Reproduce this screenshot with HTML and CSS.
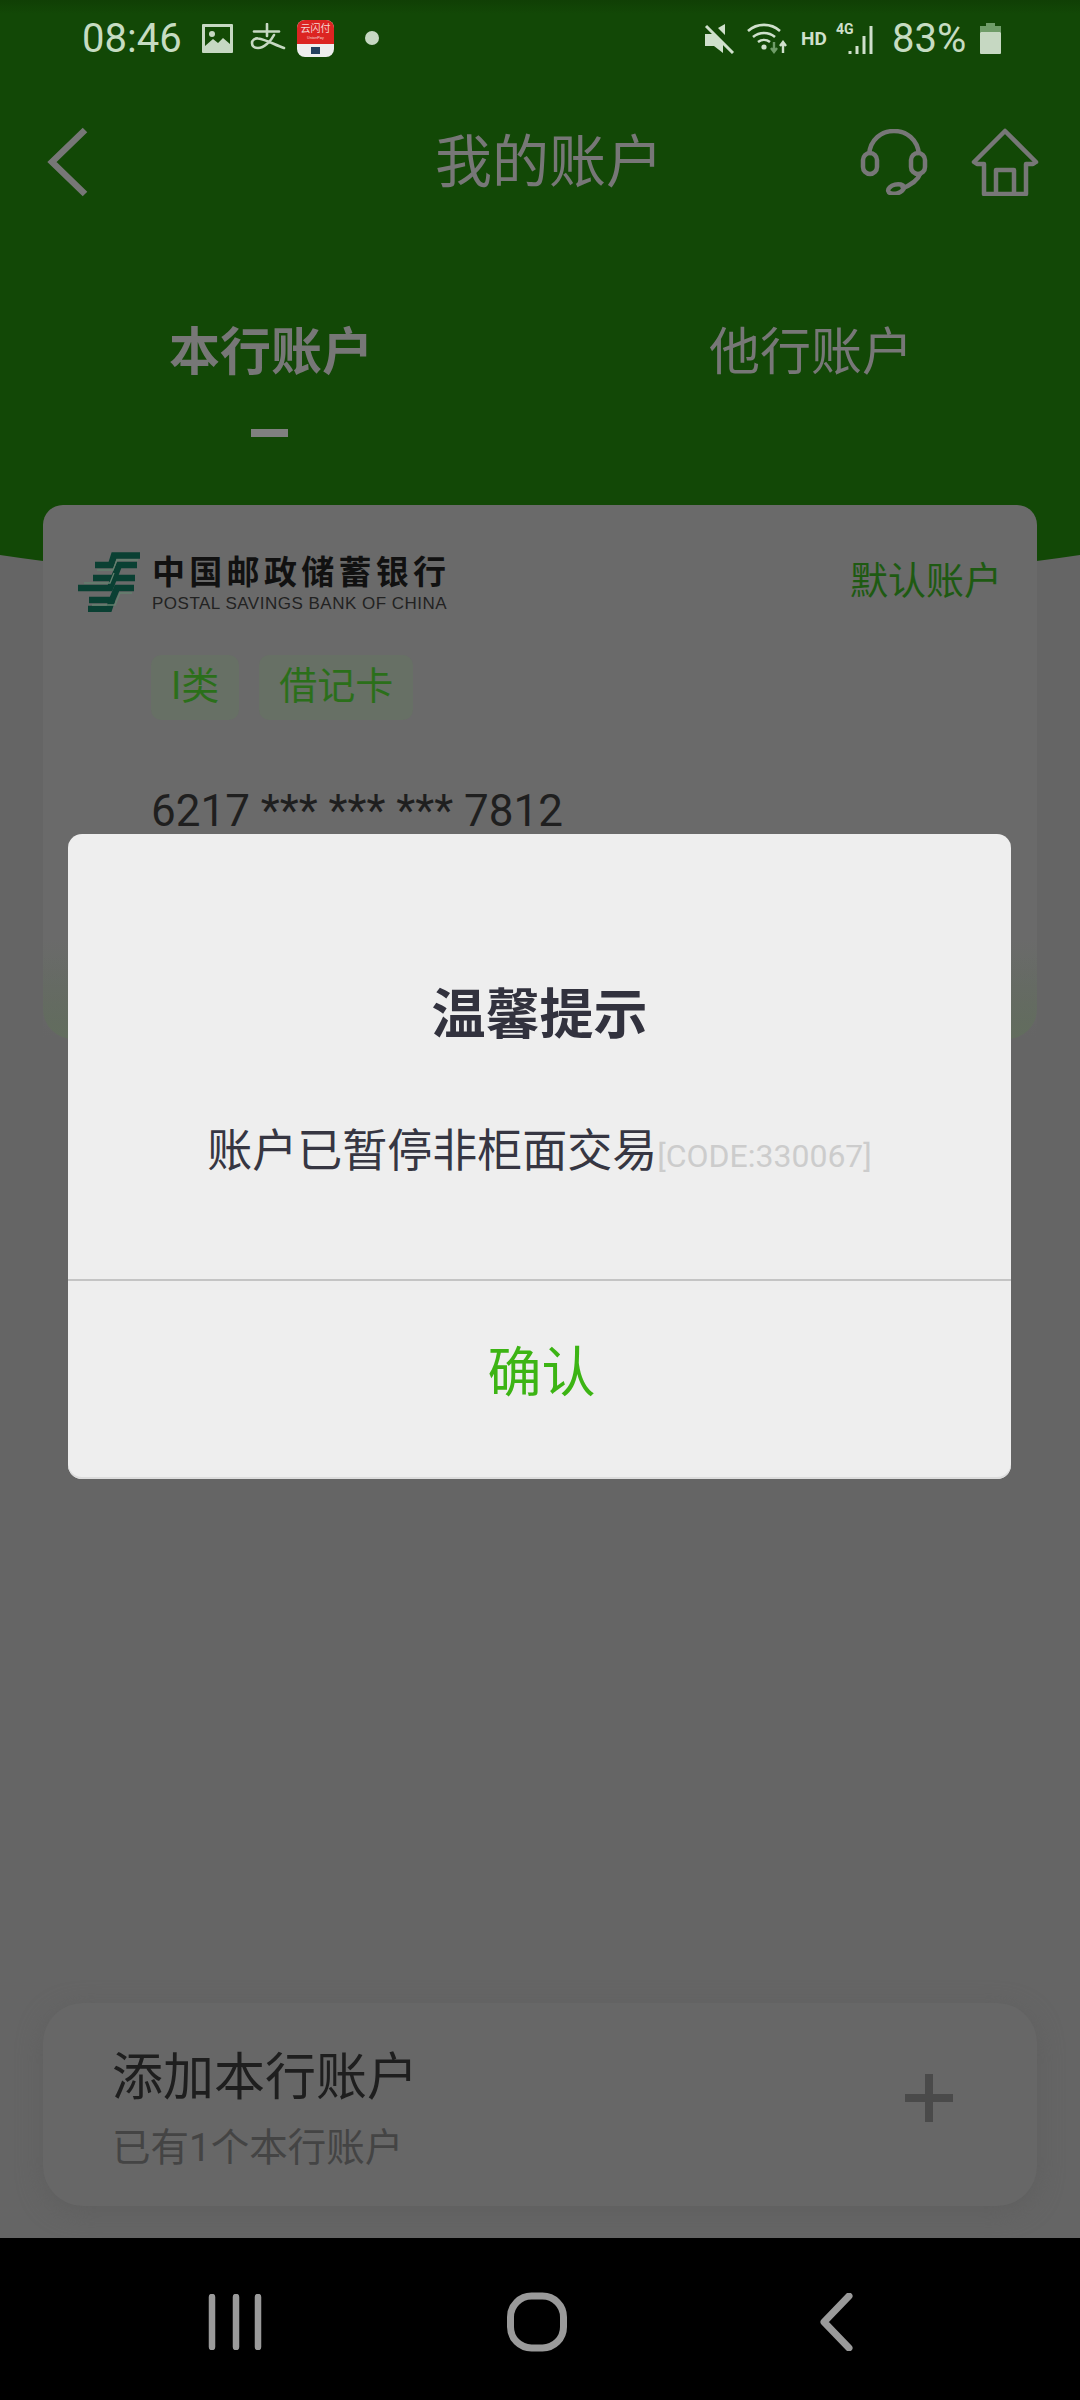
FILE: index.html
```html
<!DOCTYPE html>
<html lang="zh-CN">
<head>
  <meta charset="UTF-8"/>
  <title>我的账户</title>
  <link rel="stylesheet" href="styles.css">
</head>
<body>
<div class="page">
  <div class="header">
    <div class="status">
      <span class="clock">08:46</span>
      <svg class="ic-gallery" width="31" height="29" viewBox="0 0 31 29"><rect width="31" height="29" rx="1" fill="#c6d8c2"/><rect x="3" y="3" width="25" height="23" fill="#134a05"/><circle cx="10" cy="10" r="3" fill="#c6d8c2"/><path d="M3 26v-4l8-7 5 4 5-5 7 6v6z" fill="#c6d8c2"/></svg>
      <svg class="ic-pay" width="36" height="30" viewBox="0 0 36 30"><g fill="none" stroke="#c6d8c2" stroke-width="2.6" stroke-linecap="round"><path d="M4 8.5h25"/><path d="M17 1v12"/><path d="M24 12c-3 6-10 13-16 13-4 0-6-2-6-5s3-5 6-4.500c8 1 16 6 26 9.500" /></g></svg>
      <span class="ic-app"><span class="app-top">云闪付<small>UnionPay</small></span><span class="app-foot"><i></i></span></span>
      <span class="dot"></span>
      <span class="status-right">
        <svg width="31" height="31" viewBox="0 0 31 31"><path d="M1 11h6l2 0 10 10v9l-9-7H1zM21 1v11l-7-7z" fill="#cfe0cc"/><path d="M2 3l27 27" stroke="#cfe0cc" stroke-width="3"/></svg>
        <svg class="ic-wifi" width="42" height="32" viewBox="0 0 42 32"><g fill="none" stroke="#cfe0cc" stroke-width="2.6"><path d="M1 9a24 24 0 0 1 32 0"/><path d="M6 15a17 17 0 0 1 22 0"/><path d="M11 20a10 10 0 0 1 12 0"/></g><circle cx="17" cy="25" r="2.6" fill="#cfe0cc"/><path d="M27 20v9m-3-3l3 4 3-4" fill="none" stroke="#6f9c68" stroke-width="2.4"/><path d="M36 31v-10m-3 3l3-4 3 4" fill="none" stroke="#cfe0cc" stroke-width="2.4"/></svg>
        <span class="hd">HD</span>
        <span class="signal"><span class="net">4G</span><svg width="27" height="30" viewBox="0 0 27 30"><path d="M3 27v3M10 22v8M17 12v18M24 2v28" stroke="#cfe0cc" stroke-width="3" fill="none"/></svg></span>
        <span class="pct">83%</span>
        <svg class="ic-batt" width="21" height="31" viewBox="0 0 21 31"><path d="M6 0h9v3h6v6H0V3h6z" fill="#6f9c68"/><rect y="9" width="21" height="22" rx="1" fill="#c6d8c2"/></svg>
      </span>
    </div>
    <div class="topbar">
      <svg width="42" height="70" viewBox="0 0 42 70"><path d="M38 3L5 35l33 32" fill="none" stroke="#777" stroke-width="6.5"/></svg>
      <h1 class="title">我的账户</h1>
      <span class="top-actions">
        <svg width="68" height="66" viewBox="0 0 68 66"><g fill="none" stroke="#777" stroke-width="4.5"><path d="M9 26C10 10 22 2 34 2s24 8 25 24"/><rect x="3" y="24" width="14" height="21" rx="7"/><rect x="51" y="24" width="14" height="21" rx="7"/><path d="M60 45c-2 6-9 11-19 15"/><ellipse cx="36" cy="60" rx="8" ry="4.5" transform="rotate(-14 36 60)"/></g></svg>
        <svg width="68" height="68" viewBox="0 0 68 68"><g fill="none" stroke="#777" stroke-width="4.5" stroke-linejoin="round"><path d="M34 3L3 34l3 2h7v30h42V36h7l3-2z"/><path d="M25 66V42h18v24"/></g></svg>
      </span>
    </div>
    <div class="tabs">
      <div class="tab tab-on">本行账户<span class="tab-line"></span></div>
      <div class="tab">他行账户</div>
    </div>
  </div>

  <div class="card">
    <div class="card-top">
      <div class="bank">
        <svg class="bank-mark" width="62" height="60" viewBox="0 0 62 60"><g fill="none" stroke="#0a4033" stroke-width="6.5"><path d="M62 3.500H36l-3 9.500H17"/><path d="M59 13H41l-5 13H15"/><path d="M57 26H36l-4 10H0"/><path d="M56 36H39l-5 12H11"/><path d="M34 48l-3 9H10"/></g><g fill="none" stroke="#64806f" stroke-width="1.300"><path d="M60 8H39l-4 10H19"/><path d="M6 31h26l4-10"/><path d="M54 41H42l-5 12H14"/></g></svg>
        <div class="bank-names">
          <div class="bank-cn">中国邮政储蓄银行</div>
          <div class="bank-en">POSTAL SAVINGS BANK OF CHINA</div>
        </div>
      </div>
      <span class="default-tag">默认账户</span>
    </div>
    <div class="tags">
      <span class="tag">I类</span>
      <span class="tag">借记卡</span>
    </div>
    <div class="card-no">6217 *** *** *** 7812</div>
    <div class="card-btn"></div>
  </div>

  <div class="add-card">
    <div>
      <div class="add-title">添加本行账户</div>
      <div class="add-sub">已有1个本行账户</div>
    </div>
    <span class="plus"></span>
  </div>

  <div class="navbar">
    <svg width="56" height="56" viewBox="0 0 56 56"><path d="M4 3v50M28 3v50M50 3v50" stroke="#9a9a9a" stroke-width="6.500" stroke-linecap="round"/></svg>
    <svg class="nav-home" width="60" height="60" viewBox="0 0 60 60"><rect x="3.500" y="4" width="53" height="52" rx="21" fill="none" stroke="#9a9a9a" stroke-width="7"/></svg>
    <svg width="34" height="58" viewBox="0 0 34 58"><path d="M30 3L5 29l25 26" fill="none" stroke="#9a9a9a" stroke-width="7" stroke-linecap="round" stroke-linejoin="round"/></svg>
  </div>

  <div class="dialog">
    <div class="dialog-body">
      <div class="dialog-title">温馨提示</div>
      <div class="dialog-msg">账户已暂停非柜面交易<span class="code">[CODE:330067]</span></div>
    </div>
    <div class="dialog-ok">确认</div>
  </div>
</div>
</body>
</html>
```

FILE: styles.css
```css
* { margin: 0; padding: 0; box-sizing: border-box; }

body { font-family: Roboto, "Noto Sans CJK SC", sans-serif; background: #656565; }

.page { position: relative; width: 1080px; height: 2400px; overflow: hidden; display: flex; flex-direction: column; background: #656565; }

/* ========== green head ========== */
.header { flex: none; width: 1400px; height: 587px; margin-left: -160px; padding: 0 160px; background: linear-gradient(#103f05, #124806 14px); border-radius: 0 0 700px 700px / 0 0 88px 88px; }

.status { display: flex; align-items: center; height: 76px; padding: 0 79px 0 82px; color: #c6dcc2; }
.clock { font-size: 40px; width: 120px; }
.ic-pay { margin-left: 17px; }
.ic-app { width: 37px; height: 37px; margin-left: 11px; border-radius: 8px; overflow: hidden; display: flex; flex-direction: column; background: #eee; }
.app-top { height: 24px; background: #dc2422; color: #f4d6d4; font-size: 10px; line-height: 12px; text-align: center; padding-top: 3px; }
.app-top small { display: block; font-size: 4px; line-height: 5px; }
.app-foot { flex: 1; display: flex; align-items: center; justify-content: center; }
.app-foot i { width: 9px; height: 7px; background: #24415f; }
.dot { width: 14px; height: 14px; margin-left: 31px; border-radius: 50%; background: #c6d8c2; }
.status-right { margin-left: auto; display: flex; align-items: center; }
.ic-wifi { margin-left: 12px; }
.hd { font-size: 19px; font-weight: 700; margin-left: 12px; width: 30px; color: #cfe0cc; }
.signal { position: relative; width: 38px; height: 32px; margin-left: 5px; display: flex; justify-content: flex-end; align-items: flex-end; }
.net { position: absolute; left: 0; top: -1px; font-size: 14px; line-height: 16px; font-weight: 700; color: #cfe0cc; }
.pct { font-size: 40px; margin-left: 18px; width: 75px; }
.ic-batt { margin-left: 13px; }

.topbar { display: flex; align-items: center; height: 100px; margin-top: 36px; padding: 0 41px 0 47px; }
.title { font-size: 57px; font-weight: 400; line-height: 60px; padding-top: 2px; color: #777; margin-left: 346px; }
.top-actions { margin-left: auto; display: flex; gap: 43px; align-items: center; }

.tabs { display: flex; gap: 340px; margin-top: 111px; padding-left: 169px; }
.tab { width: 200px; font-size: 51px; line-height: 60px; color: #777; text-align: center; white-space: nowrap; }
.tab-on { font-weight: 700; }
.tab-line { display: block; width: 37px; height: 8px; margin: 46px auto 0; background: #808080; }

/* ========== account card ========== */
.card { position: relative; flex: none; width: 994px; height: 532px; margin: -82px 0 0 43px; padding: 47px 35px 0 35px; border-radius: 20px 20px 0 0; background: linear-gradient(#6a6a6a 85%, #656565); }
.card-top { display: flex; justify-content: space-between; }
.bank { display: flex; gap: 12px; }
.bank-cn { font-size: 33px; line-height: 42px; font-weight: 700; letter-spacing: 4.300px; color: #111; }
.bank-en { font-family: "Liberation Sans", sans-serif; font-size: 17px; line-height: 20px; letter-spacing: .5px; color: #222; }
.default-tag { font-size: 38px; line-height: 44px; margin-top: 7px; color: #1e5a12; }
.tags { display: flex; gap: 20px; margin: 41px 0 0 73px; }
.tag { height: 65px; padding: 0 20px; line-height: 62px; font-size: 38px; border-radius: 10px; background: #677065; color: #2b6f1a; }
.card-no { margin: 65px 0 0 73px; font-size: 44px; line-height: 52px; color: #1f1f1f; }
.card-btn { height: 100px; margin: 102px -35px 0 -35px; border-radius: 0 0 30px 30px; background: linear-gradient(transparent, #626d5e); }

/* ========== add account ========== */
.add-card { flex: none; display: flex; align-items: center; justify-content: space-between; width: 994px; height: 203px; margin: auto 0 32px 43px; padding: 10px 84px 0 69px; border-radius: 40px; background: #676767; box-shadow: 0 6px 24px #5f5f5f; }
.add-title { font-size: 51px; line-height: 60px; color: #1e1e1e; }
.add-sub { font-size: 38.500px; line-height: 46px; margin-top: 17px; color: #444; }
.plus { width: 48px; height: 48px; margin-top: -24px; background: linear-gradient(#4a4a4a, #4a4a4a) center / 48px 8px no-repeat, linear-gradient(#4a4a4a, #4a4a4a) center / 8px 48px no-repeat; }

/* ========== nav bar ========== */
.navbar { flex: none; height: 162px; padding: 6px 227px 0 208px; background: #000; display: flex; align-items: center; justify-content: space-between; }
.nav-home { margin-left: -10px; }

/* ========== dialog ========== */
.dialog { position: absolute; left: 68px; top: 834px; width: 943px; height: 645px; border-radius: 14px; background: #eee; display: flex; flex-direction: column; text-align: center; overflow: hidden; box-shadow: inset 0 -2px 0 #dcdcdc; }
.dialog-body { height: 447px; padding-top: 153px; border-bottom: 2px solid #c4c4c4; }
.dialog-title { font-size: 54px; line-height: 58px; font-weight: 700; color: #32323e; }
.dialog-msg { margin-top: 77px; font-size: 45px; line-height: 60px; color: #363642; white-space: nowrap; }
.code { font-size: 32px; color: #ccc; margin-left: 0; }
.dialog-ok { flex: 1; padding-left: 4px; font-size: 54px; line-height: 186px; color: #3cb414; }
```
